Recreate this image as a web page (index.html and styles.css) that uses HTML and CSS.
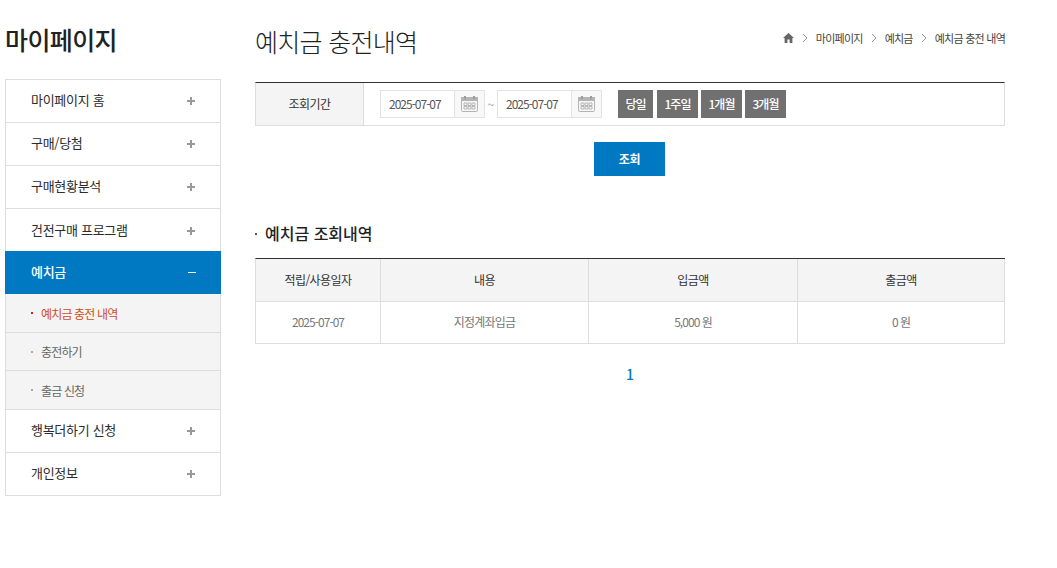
FILE: index.html
```html
<!DOCTYPE html>
<html lang="ko">
<head>
<meta charset="utf-8">
<title>예치금 충전내역</title>
<link rel="stylesheet" href="styles.css">
</head>
<body>
<div class="wrap">
  <aside class="side">
    <h2 class="side-title">마이페이지</h2>
    <ul class="menu">
      <li class="menu-item"><span>마이페이지 홈</span><i class="plus"></i></li>
      <li class="menu-item"><span>구매/당첨</span><i class="plus"></i></li>
      <li class="menu-item"><span>구매현황분석</span><i class="plus"></i></li>
      <li class="menu-item"><span>건전구매 프로그램</span><i class="plus"></i></li>
      <li class="menu-item active"><span>예치금</span><i class="minus"></i></li>
      <li class="sub current"><span>예치금 충전 내역</span></li>
      <li class="sub"><span>충전하기</span></li>
      <li class="sub"><span>출금 신청</span></li>
      <li class="menu-item"><span>행복더하기 신청</span><i class="plus"></i></li>
      <li class="menu-item"><span>개인정보</span><i class="plus"></i></li>
    </ul>
  </aside>
  <main class="main">
    <header class="head">
      <h1 class="page-title">예치금 충전내역</h1>
      <nav class="crumbs">
        <svg class="home" width="11" height="10" viewBox="0 0 11 10"><path d="M5.5 0 L11 5 H9.4 V10 H6.6 V6.6 H4.4 V10 H1.6 V5 H0 Z" fill="#666"/></svg>
        <svg class="sep" width="6" height="10" viewBox="0 0 6 10"><path d="M1 1 L5 5 L1 9" fill="none" stroke="#999"/></svg>
        <span>마이페이지</span>
        <svg class="sep" width="6" height="10" viewBox="0 0 6 10"><path d="M1 1 L5 5 L1 9" fill="none" stroke="#999"/></svg>
        <span>예치금</span>
        <svg class="sep" width="6" height="10" viewBox="0 0 6 10"><path d="M1 1 L5 5 L1 9" fill="none" stroke="#999"/></svg>
        <span>예치금 충전 내역</span>
      </nav>
    </header>
    <section class="search">
      <div class="search-label">조회기간</div>
      <div class="search-body">
        <div class="date-field">2025-07-07</div>
        <button class="cal" type="button">
          <svg width="17" height="16" viewBox="0 0 17 16"><rect x="0.5" y="1.5" width="16" height="14" rx="1" fill="#f6f6f6" stroke="#b4b4b4"/><rect x="0" y="1" width="17" height="4" fill="#b4b4b4"/><rect x="3" y="0" width="2" height="3" fill="#9c9c9c"/><rect x="12" y="0" width="2" height="3" fill="#9c9c9c"/><path d="M3 7h3v2.5H3zM7 7h3v2.5H7zM11 7h3v2.5h-3zM3 10.5h3V13H3zM7 10.5h3V13H7zM11 10.5h3V13h-3z" fill="none" stroke="#aaa" stroke-width="0.8"/></svg>
        </button>
        <span class="tilde">~</span>
        <div class="date-field">2025-07-07</div>
        <button class="cal" type="button">
          <svg width="17" height="16" viewBox="0 0 17 16"><rect x="0.5" y="1.5" width="16" height="14" rx="1" fill="#f6f6f6" stroke="#b4b4b4"/><rect x="0" y="1" width="17" height="4" fill="#b4b4b4"/><rect x="3" y="0" width="2" height="3" fill="#9c9c9c"/><rect x="12" y="0" width="2" height="3" fill="#9c9c9c"/><path d="M3 7h3v2.5H3zM7 7h3v2.5H7zM11 7h3v2.5h-3zM3 10.5h3V13H3zM7 10.5h3V13H7zM11 10.5h3V13h-3z" fill="none" stroke="#aaa" stroke-width="0.8"/></svg>
        </button>
        <div class="ranges">
          <button class="range r-day" type="button">당일</button>
          <button class="range" type="button">1주일</button>
          <button class="range" type="button">1개월</button>
          <button class="range" type="button">3개월</button>
        </div>
      </div>
    </section>
    <div class="submit-row"><button class="submit" type="button">조회</button></div>
    <h3 class="section-title">예치금 조회내역</h3>
    <table class="list">
      <colgroup><col class="c1"><col class="c2"><col class="c3"><col class="c4"></colgroup>
      <thead><tr><th>적립/사용일자</th><th>내용</th><th>입금액</th><th>출금액</th></tr></thead>
      <tbody><tr><td class="num">2025-07-07</td><td>지정계좌입금</td><td class="num">5,000 원</td><td class="num">0 원</td></tr></tbody>
    </table>
    <div class="pager">1</div>
  </main>
</div>
</body>
</html>
```
FILE: styles.css
```css
* { box-sizing: border-box; }
html, body { margin: 0; padding: 0; background: #fff; }
body { font-family: "Noto Sans CJK KR", "Noto Sans", sans-serif; color: #222; height: 568px; overflow: hidden; }
h1, h2, h3, ul { margin: 0; padding: 0; list-style: none; }
button { font-family: inherit; border: 0; padding: 0; }

.wrap { display: flex; width: 1005px; margin-left: 5px; gap: 34px; }

.side { width: 216px; flex: none; }
.side-title { height: 79px; padding-top: 21px; font-size: 25px; line-height: 36px; font-weight: 500; color: #222; letter-spacing: -0.6px; }
.menu { border: 1px solid #ddd; }
.menu-item { height: 43px; display: flex; align-items: center; justify-content: space-between; padding: 0 25px; font-size: 13px; letter-spacing: -0.3px; color: #2b2b2b; border-bottom: 1px solid #ddd; }
.menu-item span { margin-top: -3px; }
.menu-item:last-child { border-bottom: 0; height: 42px; }
.plus { width: 8px; height: 8px; display: block; background: linear-gradient(#999, #999) center / 8px 2px no-repeat, linear-gradient(#999, #999) center / 2px 8px no-repeat; }
.minus { width: 8px; height: 1px; display: block; background: #fff; }
.menu-item.active { background: #0079c2; color: #fff; font-weight: 500; height: 43px; margin: -1px -1px 0; padding: 0 25px 0 26px; border-bottom: 0; }
.menu-item:has(+ .active) { border-bottom: 0; height: 43px; }
.sub { height: 38.5px; display: flex; align-items: center; padding: 1px 0 0 25px; background: #f4f4f4; font-size: 12px; color: #666; letter-spacing: -0.85px; border-bottom: 1px solid #ddd; }
.sub::before { content: ""; width: 2px; height: 2px; background: #aaa; margin-right: 8px; }
.sub.current { color: #cf4f20; }
.sub.current::before { background: #c8201a; }

.main { width: 750px; flex: none; }
.head { height: 82px; display: flex; justify-content: space-between; align-items: flex-start; }
.page-title { font-size: 25px; line-height: 36px; font-weight: 300; color: #222; margin-top: 23px; letter-spacing: -0.7px; }
.crumbs { display: flex; align-items: center; gap: 8px; margin-top: 30px; font-size: 11px; line-height: 16px; letter-spacing: -0.75px; color: #444; }

.search { display: flex; height: 44px; border: 1px solid #ddd; border-top-color: #333; }
.search-label { width: 108px; padding-bottom: 2px; background: #f4f4f4; border-right: 1px solid #ddd; display: flex; align-items: center; justify-content: center; font-size: 12px; color: #333; letter-spacing: -0.6px; }
.search-body { display: flex; align-items: center; padding-left: 16px; }
.date-field { width: 75px; height: 28px; padding: 0 0 1px 8px; border: 1px solid #e3e3e3; display: flex; align-items: center; font-size: 12px; color: #555; letter-spacing: -1px; background: #fff; }
.cal { width: 30px; height: 28px; border: 1px solid #e3e3e3; border-left: 0; background: #f8f8f8; display: flex; align-items: center; justify-content: center; }
.tilde { width: 12px; text-align: center; font-size: 11px; color: #888; }
.ranges { display: flex; gap: 3px; margin-left: 16px; }
.range { width: 41px; height: 28px; padding-bottom: 2px; background: #707070; color: #fff; font-size: 12px; font-weight: 500; letter-spacing: -1px; }
.r-day { width: 35px; margin-right: 1px; }

.submit-row { display: flex; justify-content: center; margin-top: 16px; padding-right: 1px; }
.submit { width: 71px; height: 34px; padding-bottom: 2px; background: #0079c2; color: #fff; font-size: 12px; font-weight: 700; letter-spacing: -0.3px; }

.section-title { position: relative; margin-top: 45px; padding-left: 10px; font-size: 16px; line-height: 24px; font-weight: 500; color: #222; }
.section-title::before { content: ""; position: absolute; left: 0; top: 12px; width: 2px; height: 2px; background: #555; }

.list { width: 750px; table-layout: fixed; border-collapse: separate; border-spacing: 0; margin-top: 13px; border-top: 1px solid #333; border-left: 1px solid #ddd; }
.c1 { width: 125px; } .c2 { width: 208px; } .c3 { width: 209px; } .c4 { width: 207px; }
.list th, .list td { padding: 0 0 2px; border-right: 1px solid #ddd; border-bottom: 1px solid #ddd; text-align: center; font-size: 12px; letter-spacing: -0.8px; font-weight: 400; }
.list th { height: 43px; background: #f4f4f4; color: #333; letter-spacing: -0.6px; }
.list td { height: 42px; color: #777; }
.list td.num { letter-spacing: -0.95px; }
.pager { margin-top: 20px; text-align: center; font-size: 14px; line-height: 20px; font-weight: 500; color: #0079c2; }
```
